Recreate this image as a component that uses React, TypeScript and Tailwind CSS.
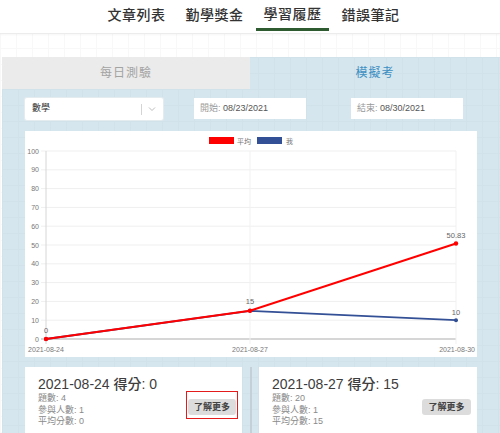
import React from 'react';

const FONT = "font-['Liberation_Sans','Noto_Sans_CJK_TC',sans-serif]";

const NAV = ['文章列表', '勤學獎金', '學習履歷', '錯誤筆記'];

// chart geometry (px inside the white chart box)
const X = [21, 225, 431];
const yAt = (v: number) => 208 - v * 1.88;
const AVG = [0, 15, 50.83];
const MINE = [0, 15, 10];
const DATES = ['2021-08-24', '2021-08-27', '2021-08-30'];

function Chart() {
  const ticks = [0, 10, 20, 30, 40, 50, 60, 70, 80, 90, 100];
  const pts = (vals: number[]) => vals.map((v, i) => `${X[i]},${yAt(v)}`).join(' ');
  return (
    <svg width={452} height={226} className="block">
      {/* legend */}
      <rect x={184} y={6} width={25} height={7} fill="#ff0000" />
      <text x={212} y={12.5} fontSize={7} fill="#777">平均</text>
      <rect x={232} y={6} width={25} height={7} fill="#334f95" />
      <text x={261} y={12.5} fontSize={7} fill="#777">我</text>

      {/* grid */}
      {ticks.map(t => (
        <g key={t}>
          <line x1={16} x2={431} y1={yAt(t)} y2={yAt(t)} stroke={t === 0 ? '#d6d6d6' : '#efefef'} strokeWidth={t === 0 ? 2 : 1} />
          <text x={14} y={yAt(t) + 2.5} fontSize={7} fill="#777" textAnchor="end">{t}</text>
        </g>
      ))}
      {X.map((x, i) => (
        <g key={x}>
          <line x1={x} x2={x} y1={20} y2={213} stroke={i === 0 ? '#d6d6d6' : '#f1f1f1'} strokeWidth={1} />
          <text x={i === 2 ? 450 : x} y={221} fontSize={7} fill="#777" textAnchor={i === 2 ? 'end' : 'middle'}>
            {DATES[i]}
          </text>
        </g>
      ))}

      {/* series */}
      <polyline points={pts(MINE)} fill="none" stroke="#334f95" strokeWidth={1.8} />
      {MINE.map((v, i) => (
        <circle key={i} cx={X[i]} cy={yAt(v)} r={2} fill="#334f95" />
      ))}
      <polyline points={pts(AVG)} fill="none" stroke="#ff0000" strokeWidth={2} />
      {AVG.map((v, i) => (
        <circle key={i} cx={X[i]} cy={yAt(v)} r={2.2} fill="#ff0000" />
      ))}

      {/* data labels */}
      <text x={21} y={202} fontSize={7.5} fill="#666" textAnchor="middle">0</text>
      <text x={225} y={173} fontSize={7.5} fill="#666" textAnchor="middle">15</text>
      <text x={431} y={107} fontSize={7.5} fill="#666" textAnchor="middle">50.83</text>
      <text x={431} y={184} fontSize={7.5} fill="#666" textAnchor="middle">10</text>
    </svg>
  );
}

function ResultCard({ date, score, count, people, avg, focused }: {
  date: string; score: number; count: number; people: number; avg: number; focused?: boolean;
}) {
  return (
    <div className="bg-white flex items-center justify-between pl-[13px] pr-[4px] pt-[9px] pb-[6px]">
      <div>
        <div className="text-[14px] leading-[16px] text-[#3d3d3d] font-medium">
          {date} 得分: {score}
        </div>
        <div className="text-[9px] leading-[11.5px] text-[#8a8a8a] mt-[1px]">
          <div>題數: {count}</div>
          <div>參與人數: {people}</div>
          <div>平均分數: {avg}</div>
        </div>
      </div>
      <div className={focused ? 'border-[1.5px] border-[#e41b1b] p-px mt-[6px]' : 'mt-[6px] p-[2.5px]'}>
        <button
          type="button"
          className="bg-[#dcdcdc] rounded-[3px] px-[6px] h-[16px] text-[9px] font-bold text-[#444] leading-[16px]"
        >
          了解更多
        </button>
      </div>
    </div>
  );
}

export default function App() {
  return (
    <div
      className={`${FONT} w-[500px] h-[433px] overflow-hidden bg-white bg-[linear-gradient(#f8f8f8_1px,transparent_1px),linear-gradient(90deg,#f8f8f8_1px,transparent_1px)] bg-[size:16px_16px]`}
    >
      {/* top nav */}
      <header className="h-[34px] bg-white border-b border-[#ececec] shadow-[0_1px_2px_rgba(0,0,0,0.04)] flex pl-[100px] gap-[5px]">
        {NAV.map(n => {
          const active = n === '學習履歷';
          return (
            <div
              key={n}
              className={`w-[73px] h-[31px] flex items-center justify-center text-[14px] font-medium tracking-[0.5px] text-[#333] ${
                active ? 'border-b-[3px] border-[#2e5b30] text-[#2b4f2d]' : ''
              }`}
            >
              {n}
            </div>
          );
        })}
      </header>

      <div className="h-[23px]" />

      {/* main panel */}
      <div className="ml-[2px] w-[498px] bg-[#d6e6ee] bg-[linear-gradient(#d1e2ea_1px,transparent_1px),linear-gradient(90deg,#d1e2ea_1px,transparent_1px)] bg-[size:16px_16px] pb-[20px]">
        <div className="flex h-[32px] text-[12px] tracking-[1px]">
          <div className="w-[248px] bg-[#ebebeb] flex items-center justify-center text-[#a3a3a3]">每日測驗</div>
          <div className="flex-1 flex items-center justify-center text-[#3b8fc2]">模擬考</div>
        </div>

        <div className="flex items-start pl-[23px] pt-[9px] text-[9px]">
          <div className="w-[138px] h-[22px] bg-white rounded-[2px] shadow-[0_0_0_1px_#e4ecef] flex items-center pl-[7px] text-[#333]">
            <span className="flex-1">數學</span>
            <span className="w-px h-[11px] bg-[#d4d4d4]" />
            <svg width={20} height={10} viewBox="0 0 20 10" className="mr-[1px]">
              <path d="M7 3.5 L10 6.5 L13 3.5" fill="none" stroke="#bdbdbd" strokeWidth={1} />
            </svg>
          </div>
          <div className="ml-[31px] w-[112px] h-[21px] bg-white flex items-center pl-[6px] text-[#555]">
            <span className="text-[#9a9a9a]">開始:</span>&nbsp;08/23/2021
          </div>
          <div className="ml-[45px] w-[112px] h-[21px] bg-white flex items-center pl-[6px] text-[#555]">
            <span className="text-[#9a9a9a]">結束:</span>&nbsp;08/30/2021
          </div>
        </div>

        <div className="ml-[23px] mt-[11px] w-[452px] h-[226px] bg-white">
          <Chart />
        </div>

        <div className="ml-[23px] mt-[10px] w-[452px] grid grid-cols-[217px_1fr_218px]">
          <ResultCard date="2021-08-24" score={0} count={4} people={1} avg={0} focused />
          <div className="flex justify-center">
            <div className="w-[2px] bg-[#c3d0d6]" />
          </div>
          <ResultCard date="2021-08-27" score={15} count={20} people={1} avg={15} />
        </div>
      </div>
    </div>
  );
}
